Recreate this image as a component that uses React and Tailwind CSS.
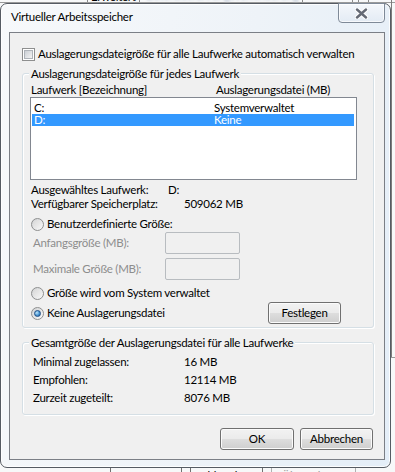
import React from "react";

function Checkbox() {
  return (
    <span className="flex h-[13px] w-[13px] shrink-0 items-center justify-center border border-[#8e8f8f] bg-white">
      <span className="h-[9px] w-[9px] border border-[#aeb3b9] bg-gradient-to-br from-[#cbcfd5] to-[#f4f4f4]" />
    </span>
  );
}

function Radio({ checked }) {
  return (
    <span className="flex h-[13px] w-[13px] shrink-0 items-center justify-center rounded-full border border-[#8e8f8f] bg-gradient-to-br from-[#cfd1d3] to-[#fbfbfb]">
      {checked ? (
        <span className="h-[7px] w-[7px] rounded-full border border-[#1f4f86] bg-[radial-gradient(circle_at_35%_35%,#bfe6fb_0%,#4a97d4_55%,#1c5a98_100%)]" />
      ) : (
        <span className="h-[9px] w-[9px] rounded-full bg-gradient-to-br from-[#d8d8d8] to-[#f6f6f6]" />
      )}
    </span>
  );
}

function Button({ children, className }) {
  return (
    <div
      className={`flex items-center justify-center rounded-[3px] border border-[#707070] bg-[linear-gradient(#f2f2f2_0%,#ebebeb_48%,#dddddd_52%,#cfcfcf_100%)] shadow-[inset_0_0_0_1px_#fbfbfb] text-black ${className}`}
    >
      {children}
    </div>
  );
}

function Group({ label, className, children }) {
  return (
    <div className={`relative rounded-[3px] border border-[#d5dfe5] shadow-[inset_1px_1px_0_#ffffff,1px_1px_0_#ffffff] ${className}`}>
      <span className="absolute left-[6px] top-[-8px] whitespace-nowrap bg-[#f0f0f0] px-[2px] leading-[15px]">
        {label}
      </span>
      {children}
    </div>
  );
}

function CloseGlyph() {
  return (
    <svg width="13" height="11" viewBox="0 0 13 11">
      <path
        d="M2 1.5 L11 9.5 M11 1.5 L2 9.5"
        stroke="#ffffff"
        strokeWidth="4.6"
        strokeLinecap="round"
      />
      <path
        d="M2 1.5 L11 9.5 M11 1.5 L2 9.5"
        stroke="#656a75"
        strokeWidth="2.4"
        strokeLinecap="round"
      />
    </svg>
  );
}

export default function App() {
  return (
    <div className="relative h-[472px] w-[395px] overflow-hidden whitespace-nowrap bg-[#f7f8f9] font-['Lato','Open_Sans',sans-serif] text-[11.5px] tracking-[-0.25px] text-black">
      {/* parent dialog peeking out behind */}
      <div className="absolute left-0 top-[-9px] flex h-[12px] w-[395px] items-end border-b border-[#9a9a9a] leading-[12px]">
        <span className="w-[87px] pl-[5px]">Visuelle Effekte</span>
        <span className="h-full w-[53px] border-x border-[#8a8a8a] pl-[3px]">Erweitert</span>
        <span className="w-[162px] pl-[6px] text-[#b7c3d2] blur-[1px]">Datenausführungsverhinderung</span>
        <span className="h-full w-[50px] border-l border-[#8a8a8a]" />
        <span className="h-full w-[6px] border-l border-[#8a8a8a]" />
        <span className="h-full w-[10px] border-l border-[#8a8a8a]" />
        <span className="h-full border-l border-[#8a8a8a]" />
      </div>
      <div className="absolute left-[391px] top-0 h-[357px] w-[1px] bg-[#7c7c7c]" />
      <div className="absolute left-[391px] top-[357px] h-[1px] w-[4px] bg-[#9a9a9a]" />
      <div className="absolute left-[110px] top-[464px] flex gap-[8px] leading-[22px]">
        <div className="h-[23px] w-[72px] border border-[#707070] text-center">OK</div>
        <div className="h-[23px] w-[73px] border border-[#707070] text-center">Abbrechen</div>
        <div className="h-[23px] w-[85px] border border-[#b0b0b0] text-center text-[#9a9a9a]">Übernehmen</div>
      </div>

      {/* dialog window */}
      <div className="absolute left-0 top-[3px] flex h-[465px] w-[391px] flex-col rounded-[7px] border border-[#555b63] bg-[linear-gradient(100deg,#f7f9fb_0%,#eef3f8_55%,#e4eef8_100%)] pl-[8px] pr-[5px] shadow-[inset_0_0_0_1px_rgba(255,255,255,0.85)]">
        <div className="flex h-[28px] shrink-0 pl-[2px] pt-[5px] leading-[15px]">
          Virtueller Arbeitsspeicher
        </div>
        <div className="absolute left-[337px] top-[-1px] flex h-[20px] w-[47px] items-center justify-center rounded-b-[4px] border border-[#7f8a98] bg-[linear-gradient(#f4f7fb,#e3ebf4)] shadow-[inset_0_0_0_1px_rgba(255,255,255,0.7)]">
          <CloseGlyph />
        </div>

        {/* client area */}
        <div className="flex h-[428px] w-[376px] flex-col border border-[#7b7f86] bg-[#f0f0f0]">
          <div className="mt-[13px] flex h-[16px] items-center gap-[3px] pl-[12px]">
            <Checkbox />
            <span>Auslagerungsdateigröße für alle Laufwerke automatisch verwalten</span>
          </div>

          <Group
            label="Auslagerungsdateigröße für jedes Laufwerk"
            className="ml-[12px] mt-[11px] flex h-[255px] w-[352px] flex-col"
          >
            <div className="mt-[8px] flex h-[15px] pl-[8px] leading-[15px]">
              <span className="w-[185px]">Laufwerk [Bezeichnung]</span>
              <span>Auslagerungsdatei (MB)</span>
            </div>
            <div className="ml-[7px] h-[83px] w-[327px] border border-[#828790] bg-white pt-[3px]">
              <div className="ml-[1px] flex h-[13px] w-[322px] pl-[2px] leading-[13px]">
                <span className="w-[180px]">C:</span>
                <span>Systemverwaltet</span>
              </div>
              <div className="ml-[1px] flex h-[12px] w-[322px] bg-[#3399ff] pl-[2px] leading-[12px] text-white">
                <span className="w-[180px]">D:</span>
                <span>Keine</span>
              </div>
            </div>

            <div className="mt-[3px] flex h-[14px] pl-[8px] leading-[14px]">
              <span className="w-[137px] shrink-0">Ausgewähltes Laufwerk:</span>
              <span>D:</span>
            </div>
            <div className="flex h-[14px] pl-[8px] leading-[14px]">
              <span className="w-[153px] shrink-0">Verfügbarer Speicherplatz:</span>
              <span>509062 MB</span>
            </div>

            <div className="mt-[6px] flex h-[14px] items-center gap-[3px] pl-[8px] leading-[14px]">
              <Radio />
              <span>Benutzerdefinierte Größe:</span>
            </div>
            <div className="mt-[1px] flex h-[22px] items-center pl-[10px] text-[#8d8d8d]">
              <span className="w-[132px]">Anfangsgröße (MB):</span>
              <span className="h-[22px] w-[75px] rounded-[2px] border border-[#b8bcc0] bg-[#f0f0f0]" />
            </div>
            <div className="mt-[4px] flex h-[22px] items-center pl-[10px] text-[#8d8d8d]">
              <span className="w-[132px]">Maximale Größe (MB):</span>
              <span className="h-[22px] w-[75px] rounded-[2px] border border-[#b8bcc0] bg-[#f0f0f0]" />
            </div>

            <div className="mt-[6px] flex h-[14px] items-center gap-[3px] pl-[8px] leading-[14px]">
              <Radio />
              <span>Größe wird vom System verwaltet</span>
            </div>
            <div className="mt-[2px] flex h-[22px] items-center justify-between pl-[8px] pr-[32px]">
              <div className="flex items-center gap-[3px]">
                <Radio checked />
                <span>Keine Auslagerungsdatei</span>
              </div>
              <Button className="h-[22px] w-[73px]">Festlegen</Button>
            </div>
          </Group>

          <Group
            label="Gesamtgröße der Auslagerungsdatei für alle Laufwerke"
            className="ml-[12px] mt-[14px] flex h-[73px] w-[352px] flex-col"
          >
            <div className="mt-[10px] flex h-[18px] items-center pl-[10px]">
              <span className="w-[151px]">Minimal zugelassen:</span>
              <span>16 MB</span>
            </div>
            <div className="flex h-[18px] items-center pl-[10px]">
              <span className="w-[151px]">Empfohlen:</span>
              <span>12114 MB</span>
            </div>
            <div className="flex h-[18px] items-center pl-[10px]">
              <span className="w-[151px]">Zurzeit zugeteilt:</span>
              <span>8076 MB</span>
            </div>
          </Group>

          <div className="mt-[13px] flex justify-end gap-[6px] pr-[11px]">
            <Button className="h-[22px] w-[74px]">OK</Button>
            <Button className="h-[22px] w-[73px]">Abbrechen</Button>
          </div>
        </div>
      </div>
    </div>
  );
}
